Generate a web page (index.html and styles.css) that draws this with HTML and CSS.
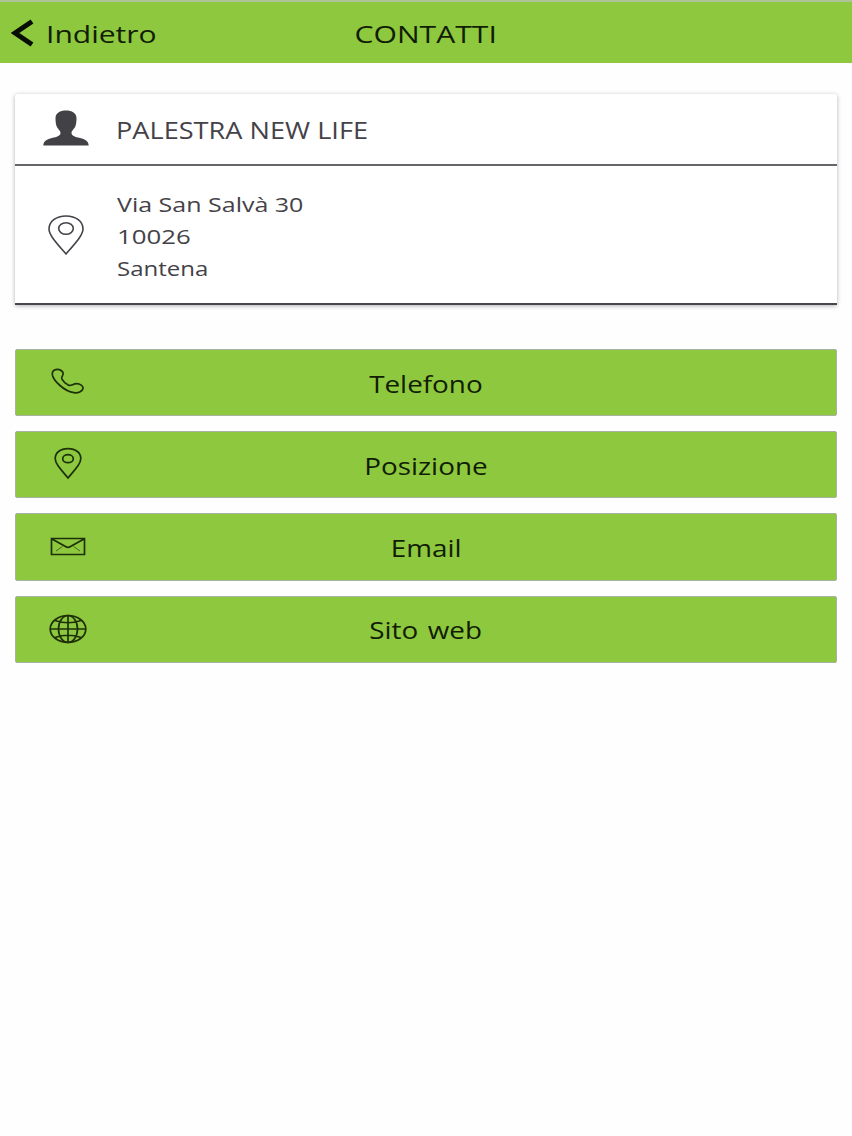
FILE: index.html
```html
<!DOCTYPE html>
<html lang="it">
<head>
<meta charset="utf-8">
<title>Contatti</title>
<link rel="stylesheet" href="styles.css">
</head>
<body>
<header class="topbar">
  <a class="back">
    <svg class="chevron" viewBox="0 0 24 30"><path d="M21 2.500 L4 14 L21 25.500"/></svg>
    <span class="back-label">Indietro</span>
  </a>
  <h1 class="title"><span class="title-text">CONTATTI</span></h1>
</header>
<main class="content">
  <section class="card">
    <div class="row row-name">
      <div class="row-icon"><svg class="person" viewBox="0 0 46 36"><path d="M23 0.500C17 0.500 12.500 3 12.500 8C12.500 11 12.800 14 13.500 16C14.500 19 17.500 20.500 17.500 23C17.500 25.500 14 27 9 28C4 29.200 0.500 31 0.300 35.500H45.700C45.500 31 42 29.200 37 28C32 27 28.500 25.500 28.500 23C28.500 20.500 31.500 19 32.500 16C33.200 14 33.500 11 33.500 8C33.500 3 29 0.500 23 0.500Z"/></svg></div>
      <div class="name">PALESTRA NEW LIFE</div>
    </div>
    <div class="row row-address">
      <div class="row-icon"><svg class="pin-large" viewBox="0 0 36 40"><path d="M18 1C8 1 1 6.500 1 14C1 20 8 27.500 18 39C28 27.500 35 20 35 14C35 6.500 28 1 18 1Z"/><ellipse cx="18" cy="13.500" rx="7.300" ry="5.700"/></svg></div>
      <div class="address"><div><span class="street">Via San Salvà 30</span></div><div><span class="zip">10026</span></div><div><span class="city">Santena</span></div></div>
    </div>
  </section>
  <nav class="actions">
    <a class="action"><svg class="action-icon" viewBox="0 0 40 34"><path d="M6.500 5C9.500 3.500 13.500 4.500 15 7.500C16.200 10.500 12.800 11.500 13.800 13.800C15.300 16.500 18 19 20.500 20.300C23.500 21.200 25 18.700 28.500 18.700C32 18.700 35.500 20.800 35 23.500C34.500 26.500 30 28.200 26 27.700C21 27 16.500 24.500 12 20.500C8 17 5.300 13.500 4.500 10.500C4 8 4.500 6 6.500 5Z"/></svg><span class="label">Telefono</span></a>
    <a class="action"><svg class="action-icon" viewBox="0 0 40 34"><path d="M20 1.700C12 1.700 7.200 6 7.200 11.500C7.200 16.500 12 21.500 20 31C28 21.500 32.800 16.500 32.800 11.500C32.800 6 28 1.700 20 1.700Z"/><ellipse cx="20" cy="11.700" rx="5.300" ry="4"/></svg><span class="label">Posizione</span></a>
    <a class="action"><svg class="action-icon" viewBox="0 0 40 34"><path d="M3.500 8.500H36.500V24.500H3.500ZM4 9L17.500 16.500Q20 18.300 22.500 16.500L36 9"/><path class="faint" d="M8 21L14.500 16.500M32 21L25.500 16.500"/></svg><span class="label">Email</span></a>
    <a class="action"><svg class="action-icon" viewBox="0 0 40 34"><ellipse cx="20" cy="17" rx="17.800" ry="13.500"/><ellipse cx="20" cy="17" rx="9.500" ry="13.500"/><path d="M20 3.500V30.500M2.200 17H37.800M7 8.500Q20 13 33 8.500M7 25.500Q20 21 33 25.500"/></svg><span class="label label-web">Sito web</span></a>
  </nav>
</main>
</body>
</html>
```
FILE: styles.css
```css
* { box-sizing: border-box; }
body { margin: 0; background: #fefefe; color: #111d04; font-family: "Open Sans", "Noto Sans", sans-serif; }
svg { display: block; }
.topbar { height: 63px; background: #8dc83f; border-top: 2px solid #b0c397; padding-top: 2px; display: grid; grid-template-columns: 1fr auto 1fr; align-items: center; }
.back { display: flex; align-items: center; padding-left: 11px; }
.chevron { width: 24px; height: 30px; fill: none; stroke: #080d03; stroke-width: 5; }
.back-label { margin-left: 11px; font-size: 24px; line-height: 32px; transform: scaleX(1.25); transform-origin: left; }
.title { margin: 0; font-size: 24px; line-height: 32px; font-weight: 400; }
.title-text { display: inline-block; transform: scaleX(1.255); }
.content { padding: 31px 15px 0; }
.card { background: #fff; border-radius: 2px; box-shadow: 0 1px 4px rgba(60, 60, 80, .4); color: #444248; }
.row { display: flex; align-items: center; }
.row-name { height: 72px; border-bottom: 2px solid #68656a; }
.row-address { height: 139px; border-bottom: 2px solid #4a444c; }
.row-icon { width: 102px; display: flex; justify-content: center; flex: none; }
.person { width: 46px; height: 36px; margin-bottom: 2px; fill: #424145; }
.pin-large { width: 36px; height: 40px; fill: none; stroke: #45434a; stroke-width: 1.600; }
.name { padding-top: 2px; margin-left: -1px; font-size: 23px; line-height: 32px; transform: scaleX(1.18); transform-origin: left; }
.address { padding-top: 4px; font-size: 20px; line-height: 32px; }
.street, .zip, .city { display: inline-block; transform: scaleX(1.25); transform-origin: left; }
.zip { transform: scaleX(1.29); }
.city { transform: scaleX(1.2); }
.actions { margin-top: 44px; display: flex; flex-direction: column; gap: 14.900px; }
.action { height: 67.300px; padding: 0 32px; border: 1px solid #a5b3a0; border-radius: 2px; background: #8dc83f; display: grid; grid-template-columns: 40px 1fr 40px; align-items: center; }
.action-icon { width: 40px; height: 34px; margin-top: -1px; fill: none; stroke: #1d3008; stroke-width: 1.700; }
.faint { stroke-width: 1; opacity: .6; }
.label { justify-self: center; padding-top: 2px; font-size: 23px; line-height: 32px; transform: scaleX(1.21); }
.label-web { word-spacing: 2px; }
```
